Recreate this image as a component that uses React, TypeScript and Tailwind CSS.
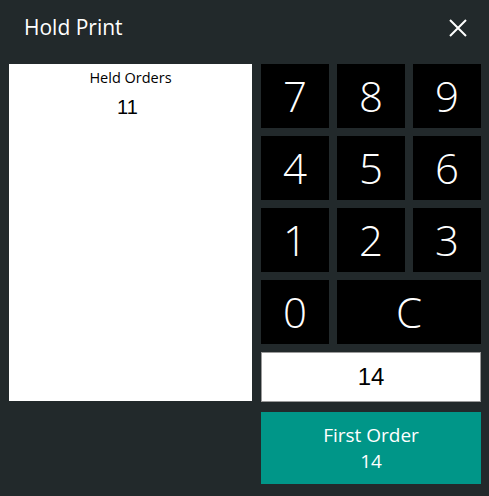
const KEYS = ['7', '8', '9', '4', '5', '6', '1', '2', '3']

export default function App() {
  return (
    <div className="w-[489px] h-[496px] bg-[#22292b] font-['Open_Sans','Noto_Sans',sans-serif] select-none">
      {/* Header */}
      <div className="h-[64px] flex items-center justify-between pl-[24px] pr-[22px] pb-[8px]">
        <span className="text-white text-[21px]">Hold Print</span>
        <svg width="18" height="18" viewBox="0 0 18 18" className="text-white">
          <path d="M1 1L17 17M17 1L1 17" stroke="currentColor" strokeWidth="2" />
        </svg>
      </div>

      <div className="flex pl-[9px] gap-[9px]">
        {/* Held orders list */}
        <div className="w-[243px] h-[337px] bg-white flex flex-col items-center">
          <span className="mt-[3px] text-[14.5px] text-black">Held Orders</span>
          <span className="mt-[3px] mr-[6px] text-[20px] text-black font-['Liberation_Sans',sans-serif]">11</span>
        </div>

        {/* Keypad */}
        <div className="w-[220px] flex flex-col">
          <div className="grid grid-cols-3 gap-[8px]">
            {KEYS.map((k) => (
              <button key={k} className="h-[64px] bg-black text-white text-[42px] font-light leading-none flex items-center justify-center">
                {k}
              </button>
            ))}
            <button className="h-[64px] bg-black text-white text-[42px] font-light leading-none flex items-center justify-center">0</button>
            <button className="col-span-2 h-[64px] bg-black text-white text-[42px] font-light leading-none flex items-center justify-center">C</button>
          </div>
          <div className="mt-[8px] h-[50px] bg-white border border-[#9a9a9a] flex items-center justify-center text-[24px] text-black font-['Liberation_Sans',sans-serif]">
            14
          </div>
          <button className="mt-[10px] h-[72px] bg-[#009688] text-white flex flex-col items-center justify-center leading-[26px]">
            <span className="text-[19px]">First Order</span>
            <span className="text-[19px]">14</span>
          </button>
        </div>
      </div>
    </div>
  )
}
